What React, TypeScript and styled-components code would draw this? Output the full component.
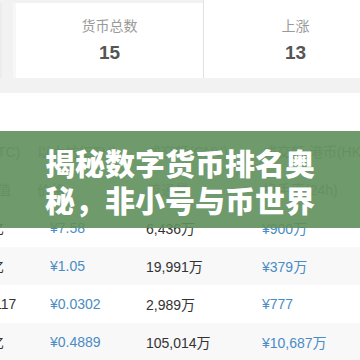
import React from 'react'
import styled, { createGlobalStyle } from 'styled-components'

const GlobalStyle = createGlobalStyle`
  html, body {
    margin: 0;
    padding: 0;
    background: #ffffff;
  }
  body {
    width: 360px;
    height: 360px;
    overflow: hidden;
    font-family: 'Liberation Sans', 'Noto Sans CJK SC', sans-serif;
  }
`

const Page = styled.div`
  width: 360px;
  height: 360px;
  overflow: hidden;
  background: #ffffff;
`

const StatBand = styled.div`
  display: flex;
  align-items: flex-start;
  height: 93px;
  padding-top: 3px;
  box-sizing: border-box;
  background: #f2f2f2;
  border-bottom: 0;
  overflow: hidden;
`

const EdgeStrip = styled.div`
  flex: 0 0 16px;
  height: 75px;
  box-sizing: border-box;
  border-left: 2px solid #ececec;
  border-right: 3px solid #f7f7f7;
`

const StatCard = styled.div<{ $divider?: boolean }>`
  flex: 0 0 ${p => (p.$divider ? '184px' : '187px')};
  height: ${p => (p.$divider ? '78px' : '75px')};
  margin-top: ${p => (p.$divider ? '-3px' : '0')};
  padding-top: ${p => (p.$divider ? '16px' : '13px')};
  box-sizing: border-box;
  background: #ffffff;
  border-left: ${p => (p.$divider ? '1px solid #e2e2e2' : 'none')};
  display: flex;
  flex-direction: column;
  align-items: center;
`

const StatLabel = styled.div`
  font-size: 14px;
  line-height: 20px;
  color: #9a9a9a;
`

const StatValue = styled.div`
  margin-top: 5px;
  font-size: 19px;
  line-height: 24px;
  font-weight: 700;
  color: #555555;
`

const TableArea = styled.div`
  position: relative;
  padding-top: 40px;
  overflow: hidden;
`

const Table = styled.div`
  margin-left: -45px;
  width: 420px;
`

const HeaderRow = styled.div`
  display: grid;
  grid-template-columns: 82px 110px 116px 1fr;
  background: #fafafa;
  color: #999999;
  font-size: 14px;
  line-height: 38px;
`

const HeaderCell = styled.div`
  white-space: nowrap;
`

const DataRow = styled.div<{ $striped: boolean }>`
  display: grid;
  grid-template-columns: 95px 96px 116px 1fr;
  height: 38px;
  align-items: center;
  font-size: 14px;
  background: ${p => (p.$striped ? '#f8f8f8' : '#ffffff')};
`

const Cell = styled.div<{ $tone?: 'blue' | 'dark' }>`
  white-space: nowrap;
  color: ${p => (p.$tone === 'blue' ? '#4a8cc4' : '#333333')};
`

const Banner = styled.div`
  position: absolute;
  left: 0;
  right: 0;
  top: 38px;
  height: 97px;
  background: rgba(95, 143, 92, 0.9);
  display: flex;
  justify-content: center;
  overflow: hidden;
`

const BannerTitle = styled.h1`
  margin: 13px 0 0;
  width: 272px;
  font-family: 'Noto Sans CJK SC', sans-serif;
  font-size: 30px;
  line-height: 37px;
  font-weight: 900;
  color: #ffffff;
  text-align: center;
  word-break: break-all;
`

const rows = [
  ['4,215亿', '¥7.58', '6,436万', '¥900万'],
  ['1,097亿', '¥1.05', '19,991万', '¥379万'],
  ['1,880,117', '¥0.0302', '2,989万', '¥777'],
  ['5,138亿', '¥0.4889', '105,014万', '¥10,687万'],
]

export default function App() {
  return (
    <Page>
      <GlobalStyle />
      <StatBand>
        <EdgeStrip />
        <StatCard>
          <StatLabel>货币总数</StatLabel>
          <StatValue>15</StatValue>
        </StatCard>
        <StatCard $divider>
          <StatLabel>上涨</StatLabel>
          <StatValue>13</StatValue>
        </StatCard>
      </StatBand>
      <TableArea>
        <Table>
          <HeaderRow>
            <HeaderCell>价格(BTC)<br />流通市值</HeaderCell>
            <HeaderCell>以太坊(ETH)<br />价格</HeaderCell>
            <HeaderCell>成交额(CNY)<br />流通量</HeaderCell>
            <HeaderCell>成交额 港币(HKD)<br />换手率(24h)</HeaderCell>
          </HeaderRow>
          {rows.map((r, i) => (
            <DataRow key={i} $striped={i % 2 === 1}>
              <Cell>{r[0]}</Cell>
              <Cell $tone="blue">{r[1]}</Cell>
              <Cell>{r[2]}</Cell>
              <Cell $tone="blue">{r[3]}</Cell>
            </DataRow>
          ))}
        </Table>
        <Banner>
          <BannerTitle>揭秘数字货币排名奥秘，非小号与币世界</BannerTitle>
        </Banner>
      </TableArea>
    </Page>
  )
}
